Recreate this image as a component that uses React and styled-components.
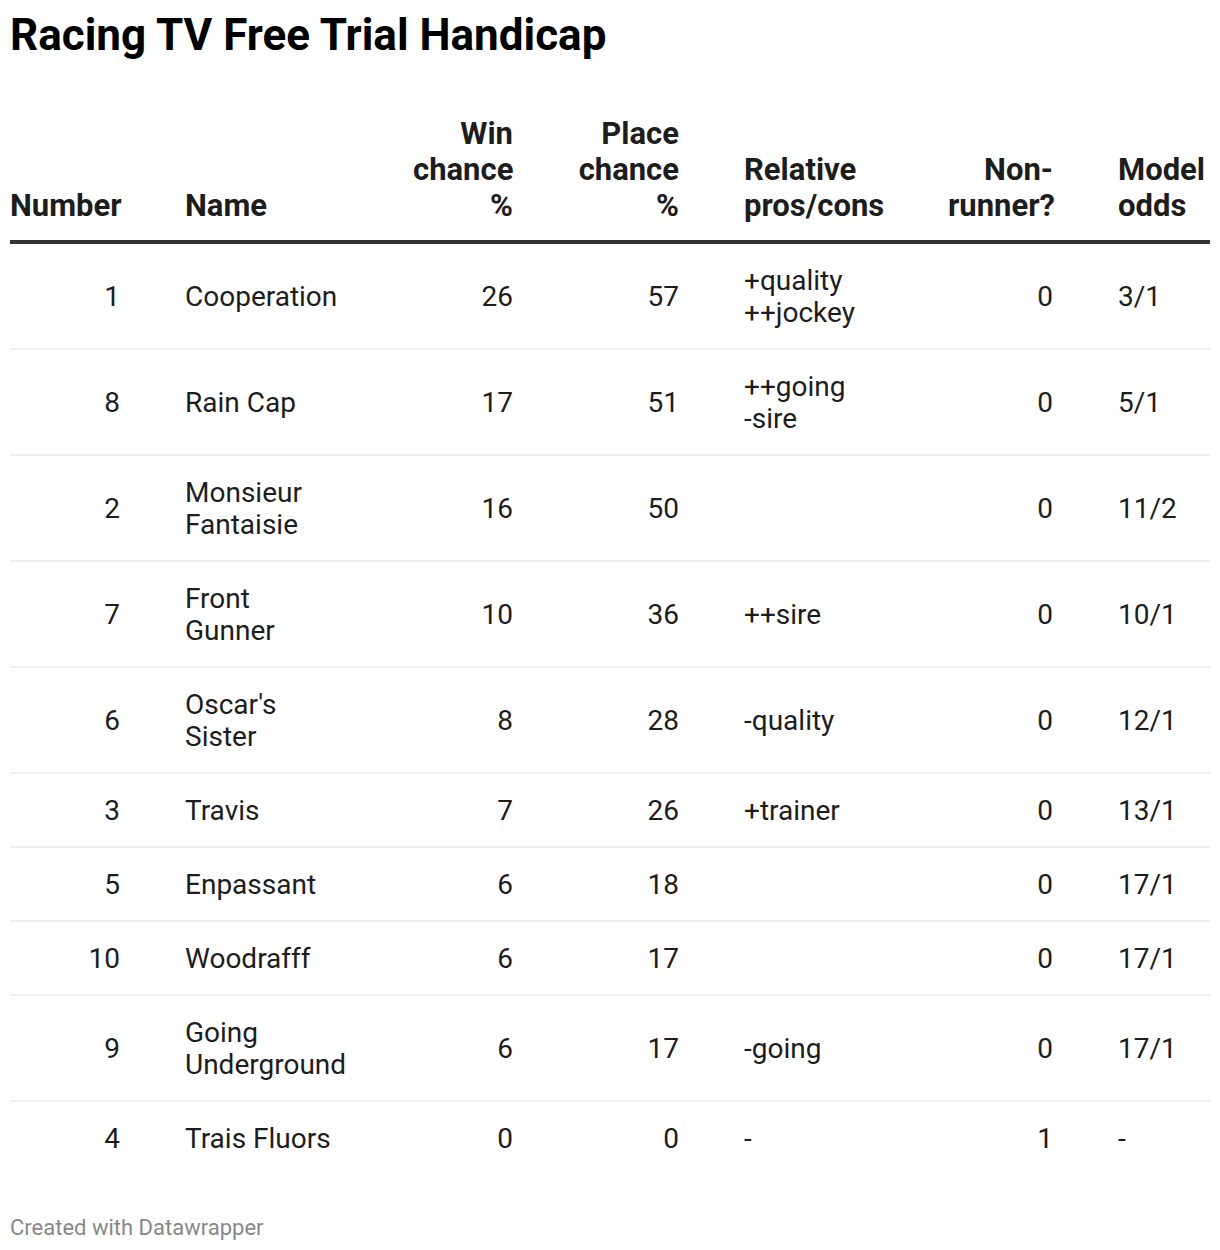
import React from "react";
import styled, { createGlobalStyle } from "styled-components";

const Global = createGlobalStyle`
  html, body { margin: 0; padding: 0; background: #fff; }
  body { font-family: Roboto, "Liberation Sans", Arial, sans-serif; color: #1d1d1d; }
`;

const Page = styled.div`
  padding: 0 10px;
  width: 1200px;
`;

const Title = styled.h1`
  margin: 0;
  padding-top: 9px;
  font-size: 44px;
  line-height: 52px;
  font-weight: 700;
  color: #000;
`;

const Table = styled.table`
  margin-top: 55px;
  width: 1200px;
  border-collapse: collapse;
  table-layout: fixed;
`;

const Col = styled.col`
  width: ${(p) => p.$w}px;
`;

const HeadCell = styled.th`
  font-size: 31px;
  line-height: 36px;
  font-weight: 700;
  color: #1d1d1d;
  vertical-align: bottom;
  text-align: ${(p) => p.$align};
  padding: 0 ${(p) => (p.$last ? 0 : 32)}px 16px ${(p) => (p.$first ? 0 : 33)}px;
  border-bottom: 4px solid #333;
`;

const Row = styled.tr`
  border-bottom: ${(p) => (p.$last ? "none" : "2px solid #eee")};
`;

const Cell = styled.td`
  font-size: 28px;
  line-height: 32px;
  font-weight: 400;
  color: #1d1d1d;
  vertical-align: middle;
  text-align: ${(p) => p.$align};
  padding: 21px ${(p) => (p.$last ? 0 : 32)}px 19px ${(p) => (p.$first ? 0 : 33)}px;
`;

const Line = styled.div``;

const Footer = styled.div`
  margin-top: 41px;
  font-size: 22px;
  line-height: 26px;
  color: #888;
`;

const cols = [
  { key: "num", label: "Number", w: 142, align: "right" },
  { key: "name", label: "Name", w: 228, align: "left" },
  { key: "win", label: "Win chance %", w: 165, align: "right" },
  { key: "place", label: "Place chance %", w: 166, align: "right" },
  { key: "rel", label: "Relative pros/cons", w: 204, align: "left" },
  { key: "nr", label: "Non-runner?", w: 170, align: "right" },
  { key: "odds", label: "Model odds", w: 125, align: "left" },
];

const rows = [
  { num: 1, name: ["Cooperation"], win: 26, place: 57, rel: ["+quality", "++jockey"], nr: 0, odds: "3/1" },
  { num: 8, name: ["Rain Cap"], win: 17, place: 51, rel: ["++going", "-sire"], nr: 0, odds: "5/1" },
  { num: 2, name: ["Monsieur", "Fantaisie"], win: 16, place: 50, rel: [], nr: 0, odds: "11/2" },
  { num: 7, name: ["Front", "Gunner"], win: 10, place: 36, rel: ["++sire"], nr: 0, odds: "10/1" },
  { num: 6, name: ["Oscar's", "Sister"], win: 8, place: 28, rel: ["-quality"], nr: 0, odds: "12/1" },
  { num: 3, name: ["Travis"], win: 7, place: 26, rel: ["+trainer"], nr: 0, odds: "13/1" },
  { num: 5, name: ["Enpassant"], win: 6, place: 18, rel: [], nr: 0, odds: "17/1" },
  { num: 10, name: ["Woodrafff"], win: 6, place: 17, rel: [], nr: 0, odds: "17/1" },
  { num: 9, name: ["Going", "Underground"], win: 6, place: 17, rel: ["-going"], nr: 0, odds: "17/1" },
  { num: 4, name: ["Trais Fluors"], win: 0, place: 0, rel: ["-"], nr: 1, odds: "-" },
];

export default function App() {
  return (
    <Page>
      <Global />
      <Title>Racing TV Free Trial Handicap</Title>
      <Table>
        <colgroup>
          {cols.map((c) => (
            <Col key={c.key} $w={c.w} />
          ))}
        </colgroup>
        <thead>
          <tr>
            {cols.map((c, i) => (
              <HeadCell key={c.key} $align={c.align} $first={i === 0} $last={i === cols.length - 1}>
                {c.label}
              </HeadCell>
            ))}
          </tr>
        </thead>
        <tbody>
          {rows.map((r, ri) => (
            <Row key={r.num} $last={ri === rows.length - 1}>
              {cols.map((c, i) => (
                <Cell key={c.key} $align={c.align} $first={i === 0} $last={i === cols.length - 1}>
                  {Array.isArray(r[c.key])
                    ? r[c.key].map((t) => <Line key={t}>{t}</Line>)
                    : r[c.key]}
                </Cell>
              ))}
            </Row>
          ))}
        </tbody>
      </Table>
      <Footer>Created with Datawrapper</Footer>
    </Page>
  );
}
